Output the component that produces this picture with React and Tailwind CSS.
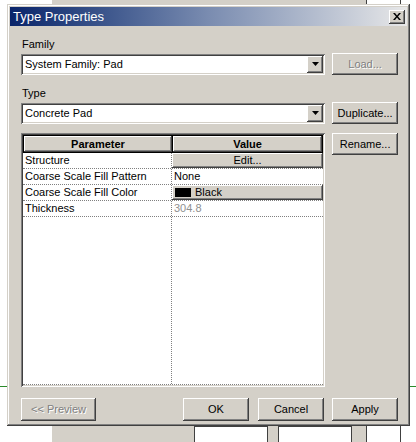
import React from "react";

const raised =
  "shadow-[inset_-1px_-1px_0_#404040,inset_1px_1px_0_#ffffff,inset_-2px_-2px_0_#808080,inset_2px_2px_0_#d4d0c8]";
const sunken =
  "shadow-[inset_1px_1px_0_#808080,inset_-1px_-1px_0_#ffffff,inset_2px_2px_0_#404040,inset_-2px_-2px_0_#d4d0c8]";

function Btn({ children, disabled, className = "" }) {
  return (
    <div
      className={`flex items-center justify-center bg-[#d4d0c8] ${raised} ${
        disabled ? "text-[#808080] [text-shadow:1px_1px_0_#ffffff]" : "text-black"
      } ${className}`}
    >
      {children}
    </div>
  );
}

function Arrow() {
  return (
    <div className={`w-[16px] h-[17px] bg-[#d4d0c8] ${raised} flex items-center justify-center`}>
      <svg width="7" height="4" viewBox="0 0 7 4">
        <path d="M0 0h7L3.5 4z" fill="#000" />
      </svg>
    </div>
  );
}

function Select({ value }) {
  return (
    <div className={`w-[305px] h-[21px] bg-white ${sunken} flex items-center pl-[4px] pr-[2px]`}>
      <div className="flex-1 text-black">{value}</div>
      <Arrow />
    </div>
  );
}

function Row({ name, children }) {
  return (
    <div className="flex h-[16px] border-b border-dotted border-[#808080]">
      <div className="w-[149px] pl-[2px] flex items-center border-r border-dotted border-[#808080]">{name}</div>
      <div className="flex-1 flex items-center">{children}</div>
    </div>
  );
}

export default function App() {
  return (
    <div
      className="relative w-[416px] h-[442px] bg-white overflow-hidden text-[11px] leading-none"
      style={{ fontFamily: '"Liberation Sans", Arial, sans-serif' }}
    >
      {/* background windows */}
      <div className="absolute left-[52px] top-[-20px] w-[315px] h-[470px] bg-[#d4d0c8] border-r border-[#404040]">
        <div className="absolute left-[142px] top-[446px] w-[74px] h-[30px] bg-white border border-[#404040]" />
        <div className="absolute left-[226px] top-[446px] w-[74px] h-[30px] bg-white border border-[#404040]" />
      </div>
      <div className="absolute left-[367px] top-[-20px] w-[34px] h-[470px] bg-white border-r border-[#404040]" />
      <div className="absolute left-0 top-[386px] w-[416px] h-px bg-[#2a8a2a]" />

      {/* dialog */}
      <div className="absolute left-[7px] top-[4px] w-[403px] h-[422px] bg-[#d4d0c8] shadow-[inset_-1px_-1px_0_#404040,inset_1px_1px_0_#d4d0c8,inset_-2px_-2px_0_#808080,inset_2px_2px_0_#ffffff] p-[3px] flex flex-col">
        <div className="h-[19px] flex items-center justify-between pl-[3px] pr-[2px] bg-gradient-to-r from-[#0a246a] via-[#7a8cb0] to-[#e8e8e8]">
          <span className="text-white text-[13px]">Type Properties</span>
          <div className={`w-[16px] h-[14px] bg-[#d4d0c8] ${raised} flex items-center justify-center`}>
            <svg width="8" height="7" viewBox="0 0 8 7">
              <path d="M0 0h2l2 2.5L6 0h2L5 3.5 8 7H6L4 4.5 2 7H0l3-3.5z" fill="#000" />
            </svg>
          </div>
        </div>

        <div className="flex-1 flex flex-col pl-[11px] pr-[9px]">
          <div className="mt-[13px] h-[12px] pl-[1px]">Family</div>
          <div className="mt-[2px] flex gap-[7px] items-center">
            <Select value="System Family: Pad" />
            <Btn disabled className="w-[66px] h-[22px]">Load...</Btn>
          </div>
          <div className="mt-[13px] h-[12px] pl-[1px]">Type</div>
          <div className="mt-[2px] flex gap-[7px] items-center">
            <Select value="Concrete Pad" />
            <Btn className="w-[66px] h-[22px]">Duplicate...</Btn>
          </div>

          <div className="mt-[9px] flex gap-[7px] items-start">
            <div className={`w-[305px] h-[254px] bg-white ${sunken} p-[2px]`}>
              <div className="flex h-[18px] bg-[#d4d0c8] font-bold">
                <div className={`w-[150px] flex items-center justify-center border border-black ${raised}`}>Parameter</div>
                <div className={`flex-1 flex items-center justify-center border border-black border-l-0 ${raised}`}>Value</div>
              </div>
              <Row name="Structure">
                <Btn className="w-full h-full">Edit...</Btn>
              </Row>
              <Row name="Coarse Scale Fill Pattern">
                <span className="pl-[2px]">None</span>
              </Row>
              <Row name="Coarse Scale Fill Color">
                <Btn className="w-full h-full !justify-start pl-[3px]">
                  <span className="w-[16px] h-[9px] bg-black mr-[4px]" />
                  Black
                </Btn>
              </Row>
              <Row name="Thickness">
                <span className="pl-[2px] text-[#909090]">304.8</span>
              </Row>
              <div className="flex h-[168px] border-b border-dotted border-[#808080]">
                <div className="w-[149px] border-r border-dotted border-[#808080]" />
              </div>
            </div>
            <Btn className="w-[66px] h-[22px]">Rename...</Btn>
          </div>

          <div className="mt-[11px] flex items-center">
            <Btn disabled className="w-[75px] h-[23px]">&lt;&lt; Preview</Btn>
            <div className="flex-1" />
            <Btn className="w-[66px] h-[23px]">OK</Btn>
            <Btn className="w-[66px] h-[23px] ml-[9px]">Cancel</Btn>
            <Btn className="w-[66px] h-[23px] ml-[8px]">Apply</Btn>
          </div>
        </div>
      </div>
    </div>
  );
}
